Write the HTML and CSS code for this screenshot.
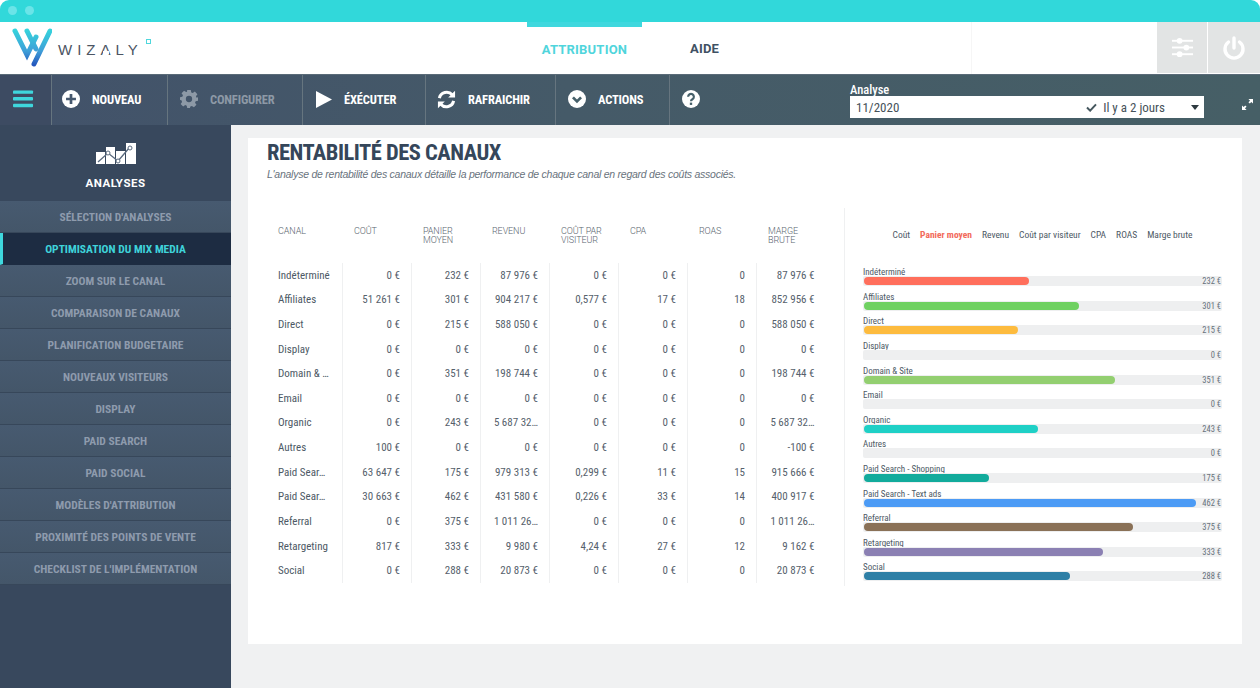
FILE: index.html
```html
<!DOCTYPE html>
<html lang="fr">
<head>
<meta charset="utf-8">
<title>Wizaly</title>
<link rel="stylesheet" href="styles.css">
</head>
<body>
<div class="app">
  <div class="chrome"><span class="dot"></span><span class="dot"></span></div>
  <header class="header">
    <div class="logo">
      <svg class="logo-mark" viewBox="0 0 40 40" width="40" height="40" fill="none" stroke-width="5" stroke-linecap="round">
        <defs>
          <linearGradient id="lg2" gradientUnits="userSpaceOnUse" x1="0" y1="2" x2="0" y2="37"><stop offset="0" stop-color="#35d3dc"/><stop offset=".6" stop-color="#3f9fd8"/><stop offset="1" stop-color="#2456bd"/></linearGradient>
        </defs>
        <path stroke="url(#lg2)" d="M3 3 L15 27 L24 9"/>
        <path stroke="url(#lg2)" d="M15 3 L24 21"/>
        <path stroke="url(#lg2)" d="M38 3 L22 36"/>
      </svg>
      <span class="logo-text">WIZ<span class="logo-a">A</span>LY</span>
      <span class="logo-reg"></span>
    </div>
    <nav class="topnav">
      <a class="topnav-item is-active">ATTRIBUTION</a>
      <a class="topnav-item">AIDE</a>
    </nav>
    <div class="header-right">
      <div class="hbtn">
        <svg viewBox="0 0 24 24" width="23" height="23" fill="#fff"><rect x="1" y="4" width="22" height="2"/><rect x="1" y="11" width="22" height="2"/><rect x="1" y="18" width="22" height="2"/><circle cx="9" cy="5" r="3"/><circle cx="16" cy="12" r="3"/><circle cx="9" cy="19" r="3"/></svg>
      </div>
      <div class="hbtn">
        <svg viewBox="0 0 24 24" width="24" height="24" fill="none" stroke="#fff" stroke-width="3.4" stroke-linecap="round"><path d="M6.5 6a9 9 0 1 0 11 0"/><path d="M12 2v10"/></svg>
      </div>
    </div>
  </header>
  <div class="toolbar">
    <div class="tool tool-menu">
      <svg viewBox="0 0 22 18" width="21" height="18" fill="#3fd6dc"><rect y="0" width="21" height="3.6" rx="1"/><rect y="7" width="21" height="3.6" rx="1"/><rect y="14" width="21" height="3.6" rx="1"/></svg>
    </div>
    <div class="tool tool-new">
      <svg viewBox="0 0 20 20" width="18" height="18"><circle cx="10" cy="10" r="10" fill="#fff"/><path d="M10 4.5v11M4.5 10h11" stroke="#46586e" stroke-width="3"/></svg>
      <span>NOUVEAU</span>
    </div>
    <div class="tool tool-config is-muted">
      <svg viewBox="0 0 20 20" width="18" height="18" fill="#8d99a6"><path fill-rule="evenodd" d="M8 0h4l.5 2.7 1.7.7L16.500 1.800l2.800 2.800-1.600 2.300.7 1.700L20 8.100v3.900l-2.600.5-.7 1.700 1.600 2.300-2.800 2.800-2.300-1.600-1.700.7L11 20H8l-.5-2.600-1.700-.7-2.300 1.600L.7 15.500l1.600-2.300-.7-1.700L0 11V8l2.600-.5.7-1.700L1.700 3.500 4.500.7l2.300 1.600 1-.4zM10 6.500a3.500 3.500 0 1 0 0 7 3.500 3.500 0 0 0 0-7z"/></svg>
      <span>CONFIGURER</span>
    </div>
    <div class="tool tool-run">
      <svg viewBox="0 0 16 17" width="16" height="17" fill="#fff"><path d="M0 0l16 8.500L0 17z"/></svg>
      <span>ÉXÉCUTER</span>
    </div>
    <div class="tool tool-refresh">
      <svg viewBox="0 0 20 20" width="19" height="19" fill="none" stroke="#fff" stroke-width="3.200"><path d="M2.500 8.500A7.800 7.800 0 0 1 16 5"/><path d="M17.500 11.500A7.800 7.800 0 0 1 4 15"/><path d="M19 .8V8h-7.200z" fill="#fff" stroke="none"/><path d="M1 19.200V12h7.200z" fill="#fff" stroke="none"/></svg>
      <span>RAFRAICHIR</span>
    </div>
    <div class="tool tool-actions">
      <svg viewBox="0 0 20 20" width="18" height="18"><circle cx="10" cy="10" r="10" fill="#fff"/><path d="M5.500 8.200L10 12.700l4.500-4.500" fill="none" stroke="#46606a" stroke-width="3"/></svg>
      <span>ACTIONS</span>
    </div>
    <div class="tool tool-help">
      <svg viewBox="0 0 20 20" width="18" height="18"><circle cx="10" cy="10" r="10" fill="#fff"/><path d="M6.800 7.500a3.200 3.200 0 1 1 4.800 2.800c-1 .6-1.600 1-1.600 2.200" fill="none" stroke="#46606a" stroke-width="2.400"/><rect x="8.700" y="14" width="2.600" height="2.600" fill="#46606a"/></svg>
    </div>
    <div class="analyse">
      <label class="analyse-label">Analyse</label>
      <div class="select">
        <span class="select-value">11/2020</span>
        <svg class="select-check" viewBox="0 0 12 10" width="11" height="9"><path d="M1 5l3.500 3.500L11 1.500" fill="none" stroke="#46585f" stroke-width="2.200"/></svg>
        <span class="select-age">Il y a 2 jours</span>
        <span class="select-caret"></span>
      </div>
    </div>
    <div class="expand">
      <svg viewBox="0 0 12 12" width="11" height="11" fill="#fff"><path d="M12 0v5L10.200 3.200 8.500 5 7 3.500 8.800 1.800 7 0z"/><path d="M0 12V7l1.800 1.800L3.500 7 5 8.500 3.200 10.200 5 12z"/></svg>
    </div>
  </div>
  <div class="main">
    <aside class="sidebar">
      <div class="side-head">
        <svg viewBox="0 0 40 22" width="40" height="22">
          <g fill="#fff"><rect x="0" y="9" width="9" height="12"/><rect x="10" y="4" width="9" height="17"/><rect x="20" y="8" width="9" height="13"/><rect x="30" y="0" width="10" height="21"/></g>
          <path d="M2 19l10-9 10 8 12-14" fill="none" stroke="#5a6a7e" stroke-width="1.300"/>
          <g fill="#fff" stroke="#5a6a7e" stroke-width="1"><circle cx="12" cy="10" r="2"/><circle cx="22" cy="18" r="2"/><circle cx="34" cy="5" r="2"/></g>
        </svg>
        <span class="side-title">ANALYSES</span>
      </div>
      <ul class="side-menu">
        <li class="side-item">SÉLECTION D'ANALYSES</li>
        <li class="side-item is-active">OPTIMISATION DU MIX MEDIA</li>
        <li class="side-item">ZOOM SUR LE CANAL</li>
        <li class="side-item">COMPARAISON DE CANAUX</li>
        <li class="side-item">PLANIFICATION BUDGETAIRE</li>
        <li class="side-item">NOUVEAUX VISITEURS</li>
        <li class="side-item">DISPLAY</li>
        <li class="side-item">PAID SEARCH</li>
        <li class="side-item">PAID SOCIAL</li>
        <li class="side-item">MODÈLES D'ATTRIBUTION</li>
        <li class="side-item">PROXIMITÉ DES POINTS DE VENTE</li>
        <li class="side-item">CHECKLIST DE L'IMPLÉMENTATION</li>
      </ul>
    </aside>
    <main class="content">
      <section class="card">
        <h1 class="title">RENTABILITÉ DES CANAUX</h1>
        <p class="subtitle">L'analyse de rentabilité des canaux détaille la performance de chaque canal en regard des coûts associés.</p>
        <div class="report">
          <table class="table">
            <thead>
              <tr><th>CANAL</th><th>COÛT</th><th>PANIER<br>MOYEN</th><th>REVENU</th><th>COÛT PAR<br>VISITEUR</th><th>CPA</th><th>ROAS</th><th>MARGE<br>BRUTE</th></tr>
            </thead>
            <tbody>
              <tr><td>Indéterminé</td><td>0 €</td><td>232 €</td><td>87 976 €</td><td>0 €</td><td>0 €</td><td>0</td><td>87 976 €</td></tr>
              <tr><td>Affiliates</td><td>51 261 €</td><td>301 €</td><td>904 217 €</td><td>0,577 €</td><td>17 €</td><td>18</td><td>852 956 €</td></tr>
              <tr><td>Direct</td><td>0 €</td><td>215 €</td><td>588 050 €</td><td>0 €</td><td>0 €</td><td>0</td><td>588 050 €</td></tr>
              <tr><td>Display</td><td>0 €</td><td>0 €</td><td>0 €</td><td>0 €</td><td>0 €</td><td>0</td><td>0 €</td></tr>
              <tr><td>Domain &amp; …</td><td>0 €</td><td>351 €</td><td>198 744 €</td><td>0 €</td><td>0 €</td><td>0</td><td>198 744 €</td></tr>
              <tr><td>Email</td><td>0 €</td><td>0 €</td><td>0 €</td><td>0 €</td><td>0 €</td><td>0</td><td>0 €</td></tr>
              <tr><td>Organic</td><td>0 €</td><td>243 €</td><td>5 687 32…</td><td>0 €</td><td>0 €</td><td>0</td><td>5 687 32…</td></tr>
              <tr><td>Autres</td><td>100 €</td><td>0 €</td><td>0 €</td><td>0 €</td><td>0 €</td><td>0</td><td>-100 €</td></tr>
              <tr><td>Paid Sear…</td><td>63 647 €</td><td>175 €</td><td>979 313 €</td><td>0,299 €</td><td>11 €</td><td>15</td><td>915 666 €</td></tr>
              <tr><td>Paid Sear…</td><td>30 663 €</td><td>462 €</td><td>431 580 €</td><td>0,226 €</td><td>33 €</td><td>14</td><td>400 917 €</td></tr>
              <tr><td>Referral</td><td>0 €</td><td>375 €</td><td>1 011 26…</td><td>0 €</td><td>0 €</td><td>0</td><td>1 011 26…</td></tr>
              <tr><td>Retargeting</td><td>817 €</td><td>333 €</td><td>9 980 €</td><td>4,24 €</td><td>27 €</td><td>12</td><td>9 162 €</td></tr>
              <tr><td>Social</td><td>0 €</td><td>288 €</td><td>20 873 €</td><td>0 €</td><td>0 €</td><td>0</td><td>20 873 €</td></tr>
            </tbody>
          </table>
          <div class="chart">
            <div class="tabs">
              <span>Coût</span><span class="is-active">Panier moyen</span><span>Revenu</span><span>Coût par visiteur</span><span>CPA</span><span>ROAS</span><span>Marge brute</span>
            </div>
            <div class="bars">
              <div class="bar"><span class="bar-label">Indéterminé</span><div class="track"><i class="fill c1" style="width:46%"></i><span class="bar-val">232 €</span></div></div>
              <div class="bar"><span class="bar-label">Affiliates</span><div class="track"><i class="fill c2" style="width:60%"></i><span class="bar-val">301 €</span></div></div>
              <div class="bar"><span class="bar-label">Direct</span><div class="track"><i class="fill c3" style="width:42.900%"></i><span class="bar-val">215 €</span></div></div>
              <div class="bar"><span class="bar-label">Display</span><div class="track"><span class="bar-val">0 €</span></div></div>
              <div class="bar"><span class="bar-label">Domain &amp; Site</span><div class="track"><i class="fill c4" style="width:69.900%"></i><span class="bar-val">351 €</span></div></div>
              <div class="bar"><span class="bar-label">Email</span><div class="track"><span class="bar-val">0 €</span></div></div>
              <div class="bar"><span class="bar-label">Organic</span><div class="track"><i class="fill c5" style="width:48.400%"></i><span class="bar-val">243 €</span></div></div>
              <div class="bar"><span class="bar-label">Autres</span><div class="track"><span class="bar-val">0 €</span></div></div>
              <div class="bar"><span class="bar-label">Paid Search - Shopping</span><div class="track"><i class="fill c6" style="width:34.800%"></i><span class="bar-val">175 €</span></div></div>
              <div class="bar"><span class="bar-label">Paid Search - Text ads</span><div class="track"><i class="fill c7" style="width:92.500%"></i><span class="bar-val">462 €</span></div></div>
              <div class="bar"><span class="bar-label">Referral</span><div class="track"><i class="fill c8" style="width:75%"></i><span class="bar-val">375 €</span></div></div>
              <div class="bar"><span class="bar-label">Retargeting</span><div class="track"><i class="fill c9" style="width:66.500%"></i><span class="bar-val">333 €</span></div></div>
              <div class="bar"><span class="bar-label">Social</span><div class="track"><i class="fill c10" style="width:57.400%"></i><span class="bar-val">288 €</span></div></div>
            </div>
          </div>
        </div>
      </section>
    </main>
  </div>
</div>
</body>
</html>
```
FILE: styles.css
```css
* { box-sizing: border-box; }
html, body { margin: 0; padding: 0; height: 100%; background: #fff; overflow: hidden; }
body { font-family: "Roboto", "Liberation Sans", sans-serif; color: #46535f; }
.app { width: 1260px; height: 688px; display: flex; flex-direction: column; overflow: hidden; border-radius: 9px 9px 0 0; }

.chrome { height: 22px; flex: none; background: #31d8da; display: flex; align-items: center; gap: 8px; padding: 0 0 1px 8px; }
.dot { width: 9px; height: 9px; border-radius: 50%; background: #6be4e8; }

.header { height: 52px; flex: none; background: #fff; display: flex; }
.logo { width: 527px; flex: none; display: flex; align-items: flex-start; padding: 6px 0 0 12px; }
.logo-mark { flex: none; }
.logo-text { font-family: "Liberation Sans", sans-serif; font-size: 15px; letter-spacing: 5px; color: #4c5563; margin: 13px 0 0 6px; line-height: 18px; }
.logo-a { position: relative; display: inline-block; }
.logo-a::after { content: ""; position: absolute; left: 2px; right: 7px; top: 10px; height: 3px; background: #fff; }
.logo-reg { width: 5px; height: 5px; border: 1.500px solid #4fd7dc; margin: 11px 0 0 3px; }
.topnav { display: flex; }
.topnav-item { font-family: "Roboto", sans-serif; font-weight: 700; font-size: 13px; letter-spacing: .2px; color: #3f5163; display: flex; align-items: center; justify-content: center; height: 52px; }
.topnav-item.is-active { width: 115px; height: 50px; color: #4fd5dc; border-top: 5px solid #3fd8de; margin-right: 48px; }
.header-right { margin-left: auto; width: 289px; display: flex; justify-content: flex-end; gap: 1px; border-left: 1px solid #f6f6f6; }
.hbtn { width: 52px; height: 51px; background: #e2e4e4; display: flex; align-items: center; justify-content: center; }
.hbtn:first-child { width: 50px; }

.toolbar { height: 51px; flex: none; display: flex; background: linear-gradient(90deg, #42526a 0%, #455a68 45%, #465f66 100%); border-top: 1px solid #5a6b78; }
.tool { display: flex; align-items: center; gap: 12px; height: 50px; padding-bottom: 2px; border-right: 1px solid #66757f; font-weight: 700; font-size: 12.500px; font-stretch: 75%; letter-spacing: -.15px; color: #fff; flex: none; }
.tool-menu { width: 52px; justify-content: center; padding-right: 4px; background: #3d4b62; }
.tool-new { width: 116px; padding-left: 10px; }
.tool-config { width: 135px; padding-left: 12px; }
.tool-run { width: 123px; padding-left: 13px; }
.tool-refresh { width: 130px; padding-left: 11px; }
.tool-actions { width: 114px; padding-left: 12px; }
.tool-help { width: 55px; padding-left: 12px; border-right: 0; }
.is-muted { color: #8d99a6; }

.analyse { width: 354px; margin-left: 125px; display: flex; flex-direction: column; padding-top: 9px; }
.analyse-label { font-family: "Roboto", sans-serif; font-weight: 500; font-size: 12.500px; font-stretch: 85%; line-height: 12px; color: #fff; }
.select { height: 22px; background: #fff; display: flex; align-items: center; padding: 0 5px 0 6px; font-family: "Roboto", sans-serif; font-size: 13px; font-stretch: 85%; color: #465159; }
.select-value { margin-right: auto; }
.select-age { margin: 0 26px 0 6px; }
.select-caret { width: 0; height: 0; border: 4.500px solid transparent; border-top: 5px solid #2e3a40; border-bottom: 0; }
.expand { margin-left: 38px; padding-top: 20px; }

.main { flex: 1; display: flex; min-height: 0; }
.sidebar { width: 231px; flex: none; background: #38485d; }
.side-head { height: 76px; display: flex; flex-direction: column; align-items: center; padding-top: 18px; }
.side-title { font-family: "Roboto", sans-serif; font-weight: 700; font-size: 11.500px; letter-spacing: .5px; color: #fff; margin-top: 11px; line-height: 14px; }
.side-menu { list-style: none; margin: 0; padding: 0; }
.side-item { height: 32px; display: flex; align-items: center; justify-content: center; background: linear-gradient(180deg, #475a70, #445669); border-bottom: 1px solid #37475a; font-weight: 700; font-size: 11.500px; font-stretch: 75%; color: #8e9bad; white-space: nowrap; }
.side-item.is-active { background: #1d2c42; color: #3fd3da; border-left: 3px solid #3fd8de; padding-right: 3px; border-bottom-color: #1d2c42; }

.content { flex: 1; background: #f0f1f2; padding: 13px 18px 44px 17px; min-width: 0; }
.card { height: 100%; background: #fff; padding: 2px 20px 0 19px; display: flex; flex-direction: column; }
.title { margin: 0; font-family: "Roboto", sans-serif; font-weight: 700; font-size: 22.500px; font-stretch: 75%; line-height: 25px; color: #35465a; letter-spacing: -.5px; }
.subtitle { margin: 1px 0 0; font-family: "Liberation Sans", sans-serif; font-style: italic; font-size: 10.500px; letter-spacing: -.25px; line-height: 16px; color: #69737d; }
.report { display: flex; margin: 26px 0 0 3px; height: 378px; }

.table { width: 555px; height: 375px; table-layout: fixed; border-collapse: collapse; flex: none; }
.table th { width: 69px; height: 55px; padding: 19px 0 0 12px; text-align: left; vertical-align: top; font-weight: 300; font-size: 9px; line-height: 9px; color: #5b6670; letter-spacing: -.1px; }
.table th:first-child { width: 72px; padding-left: 8px; }
.table td { height: 24.450px; padding: 0 10.500px 0 0; text-align: right; white-space: nowrap; font-size: 11px; font-stretch: 75%; color: #56616c; border-left: 1px solid #eff0f1; }
.table td:first-child { padding-left: 8px; text-align: left; border-left: 0; color: #4d5965; }

.chart { flex: 1; margin-left: 19px; border-left: 1px solid #eff0f1; padding-left: 18px; display: flex; flex-direction: column; }
.tabs { display: flex; justify-content: center; gap: 10px; height: 60px; padding-top: 21px; font-size: 9.500px; font-stretch: 75%; line-height: 12px; color: #4d5965; white-space: nowrap; }
.tabs .is-active { color: #f26a5a; font-weight: 700; }
.bars { display: flex; flex-direction: column; }
.bar { height: 24.600px; display: flex; flex-direction: column; }
.bar-label { font-size: 9px; font-stretch: 75%; line-height: 12px; height: 10px; color: #4d5965; }
.track { position: relative; height: 10px; background: #eeeff0; border-radius: 2px; display: flex; align-items: center; justify-content: flex-end; padding-right: 1px; }
.fill { position: absolute; left: 1px; top: 1px; height: 8px; border-radius: 4px; }
.bar-val { position: relative; font-size: 8.500px; font-stretch: 75%; line-height: 10px; color: #68727c; }
.c1 { background: #ff6f5c; }
.c2 { background: #6fd161; }
.c3 { background: #fdbb3e; }
.c4 { background: #93cf70; }
.c5 { background: #1fd0c6; }
.c6 { background: #12ab9c; }
.c7 { background: #4c9bf5; }
.c8 { background: #8a7157; }
.c9 { background: #8b80b3; }
.c10 { background: #2e7fa6; }
```
